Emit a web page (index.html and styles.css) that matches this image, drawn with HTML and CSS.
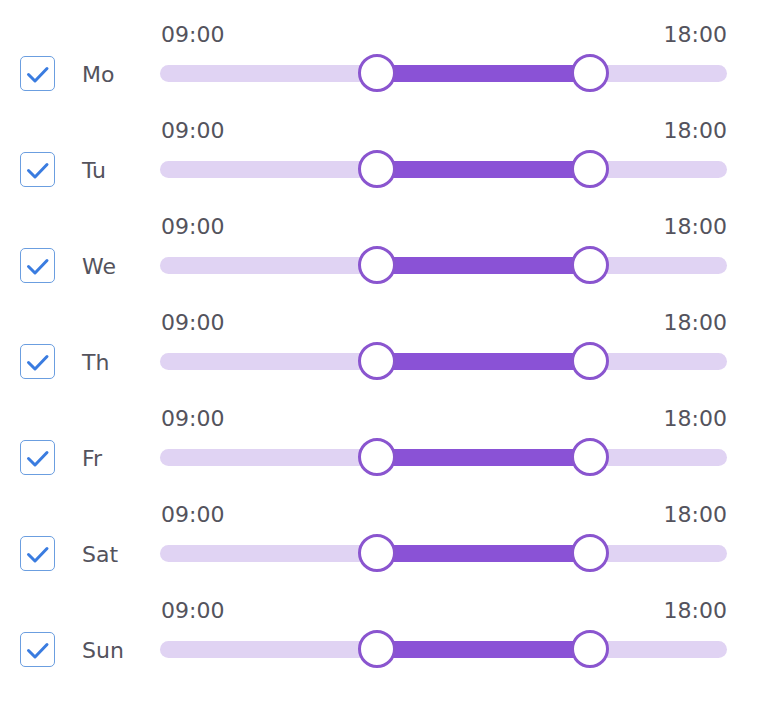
FILE: index.html
```html
<!DOCTYPE html>
<html>
<head>
<meta charset="utf-8">
<link rel="stylesheet" href="styles.css">
</head>
<body>
<div class="schedule">
  <div class="row">
    <span class="check"><svg viewBox="0 0 35 35"><polyline points="8.5,18.5 15,25 27,12.5"/></svg></span>
    <span class="day">Mo</span>
    <div class="range">
      <div class="times"><span>09:00</span><span>18:00</span></div>
      <div class="slider" style="--from:38.3%;--to:75.85%"><div class="track"></div><div class="fill"></div><span class="knob k1"></span><span class="knob k2"></span></div>
    </div>
  </div>
  <div class="row">
    <span class="check"><svg viewBox="0 0 35 35"><polyline points="8.5,18.5 15,25 27,12.5"/></svg></span>
    <span class="day">Tu</span>
    <div class="range">
      <div class="times"><span>09:00</span><span>18:00</span></div>
      <div class="slider" style="--from:38.3%;--to:75.85%"><div class="track"></div><div class="fill"></div><span class="knob k1"></span><span class="knob k2"></span></div>
    </div>
  </div>
  <div class="row">
    <span class="check"><svg viewBox="0 0 35 35"><polyline points="8.5,18.5 15,25 27,12.5"/></svg></span>
    <span class="day">We</span>
    <div class="range">
      <div class="times"><span>09:00</span><span>18:00</span></div>
      <div class="slider" style="--from:38.3%;--to:75.85%"><div class="track"></div><div class="fill"></div><span class="knob k1"></span><span class="knob k2"></span></div>
    </div>
  </div>
  <div class="row">
    <span class="check"><svg viewBox="0 0 35 35"><polyline points="8.5,18.5 15,25 27,12.5"/></svg></span>
    <span class="day">Th</span>
    <div class="range">
      <div class="times"><span>09:00</span><span>18:00</span></div>
      <div class="slider" style="--from:38.3%;--to:75.85%"><div class="track"></div><div class="fill"></div><span class="knob k1"></span><span class="knob k2"></span></div>
    </div>
  </div>
  <div class="row">
    <span class="check"><svg viewBox="0 0 35 35"><polyline points="8.5,18.5 15,25 27,12.5"/></svg></span>
    <span class="day">Fr</span>
    <div class="range">
      <div class="times"><span>09:00</span><span>18:00</span></div>
      <div class="slider" style="--from:38.3%;--to:75.85%"><div class="track"></div><div class="fill"></div><span class="knob k1"></span><span class="knob k2"></span></div>
    </div>
  </div>
  <div class="row">
    <span class="check"><svg viewBox="0 0 35 35"><polyline points="8.5,18.5 15,25 27,12.5"/></svg></span>
    <span class="day">Sat</span>
    <div class="range">
      <div class="times"><span>09:00</span><span>18:00</span></div>
      <div class="slider" style="--from:38.3%;--to:75.85%"><div class="track"></div><div class="fill"></div><span class="knob k1"></span><span class="knob k2"></span></div>
    </div>
  </div>
  <div class="row">
    <span class="check"><svg viewBox="0 0 35 35"><polyline points="8.5,18.5 15,25 27,12.5"/></svg></span>
    <span class="day">Sun</span>
    <div class="range">
      <div class="times"><span>09:00</span><span>18:00</span></div>
      <div class="slider" style="--from:38.3%;--to:75.85%"><div class="track"></div><div class="fill"></div><span class="knob k1"></span><span class="knob k2"></span></div>
    </div>
  </div>
</div>
</body>
</html>
```
FILE: styles.css
```css
html, body {
  margin: 0;
  padding: 0;
  background: #ffffff;
}
body {
  font-family: "DejaVu Sans", "Liberation Sans", sans-serif;
  color: #54535d;
}
.schedule {
  padding: 20px 0 0 20px;
  width: 707px;
  display: flex;
  flex-direction: column;
  gap: 24px;
}
.row {
  display: grid;
  grid-template-columns: 35px 105px 567px;
  align-items: end;
}
.check {
  width: 33px;
  height: 33px;
  border: 1px solid #6b9ee0;
  border-radius: 5px;
  margin-bottom: 1px;
  display: block;
}
.check svg {
  width: 35px;
  height: 35px;
  margin: -1px;
  display: block;
}
.check polyline {
  fill: none;
  stroke: #3a7ce0;
  stroke-width: 3;
  stroke-linecap: round;
  stroke-linejoin: round;
}
.day {
  font-size: 22px;
  line-height: 34px;
  padding-left: 27px;
}
.range {
  display: flex;
  flex-direction: column;
  gap: 4px;
}
.times {
  display: flex;
  justify-content: space-between;
  font-size: 22px;
  line-height: 30px;
  padding-left: 1px;
}
.slider {
  position: relative;
  height: 38px;
}
.track {
  position: absolute;
  left: 0;
  right: 0;
  top: 11px;
  height: 17px;
  border-radius: 9px;
  background: #e0d3f3;
}
.fill {
  position: absolute;
  left: var(--from);
  right: calc(100% - var(--to));
  top: 11px;
  height: 17px;
  background: #8a52d6;
}
.knob {
  position: absolute;
  top: 0;
  width: 32px;
  height: 32px;
  border: 3px solid #8a55cf;
  border-radius: 50%;
  background: #ffffff;
  transform: translateX(-50%);
}
.k1 { left: var(--from); }
.k2 { left: var(--to); }
```
